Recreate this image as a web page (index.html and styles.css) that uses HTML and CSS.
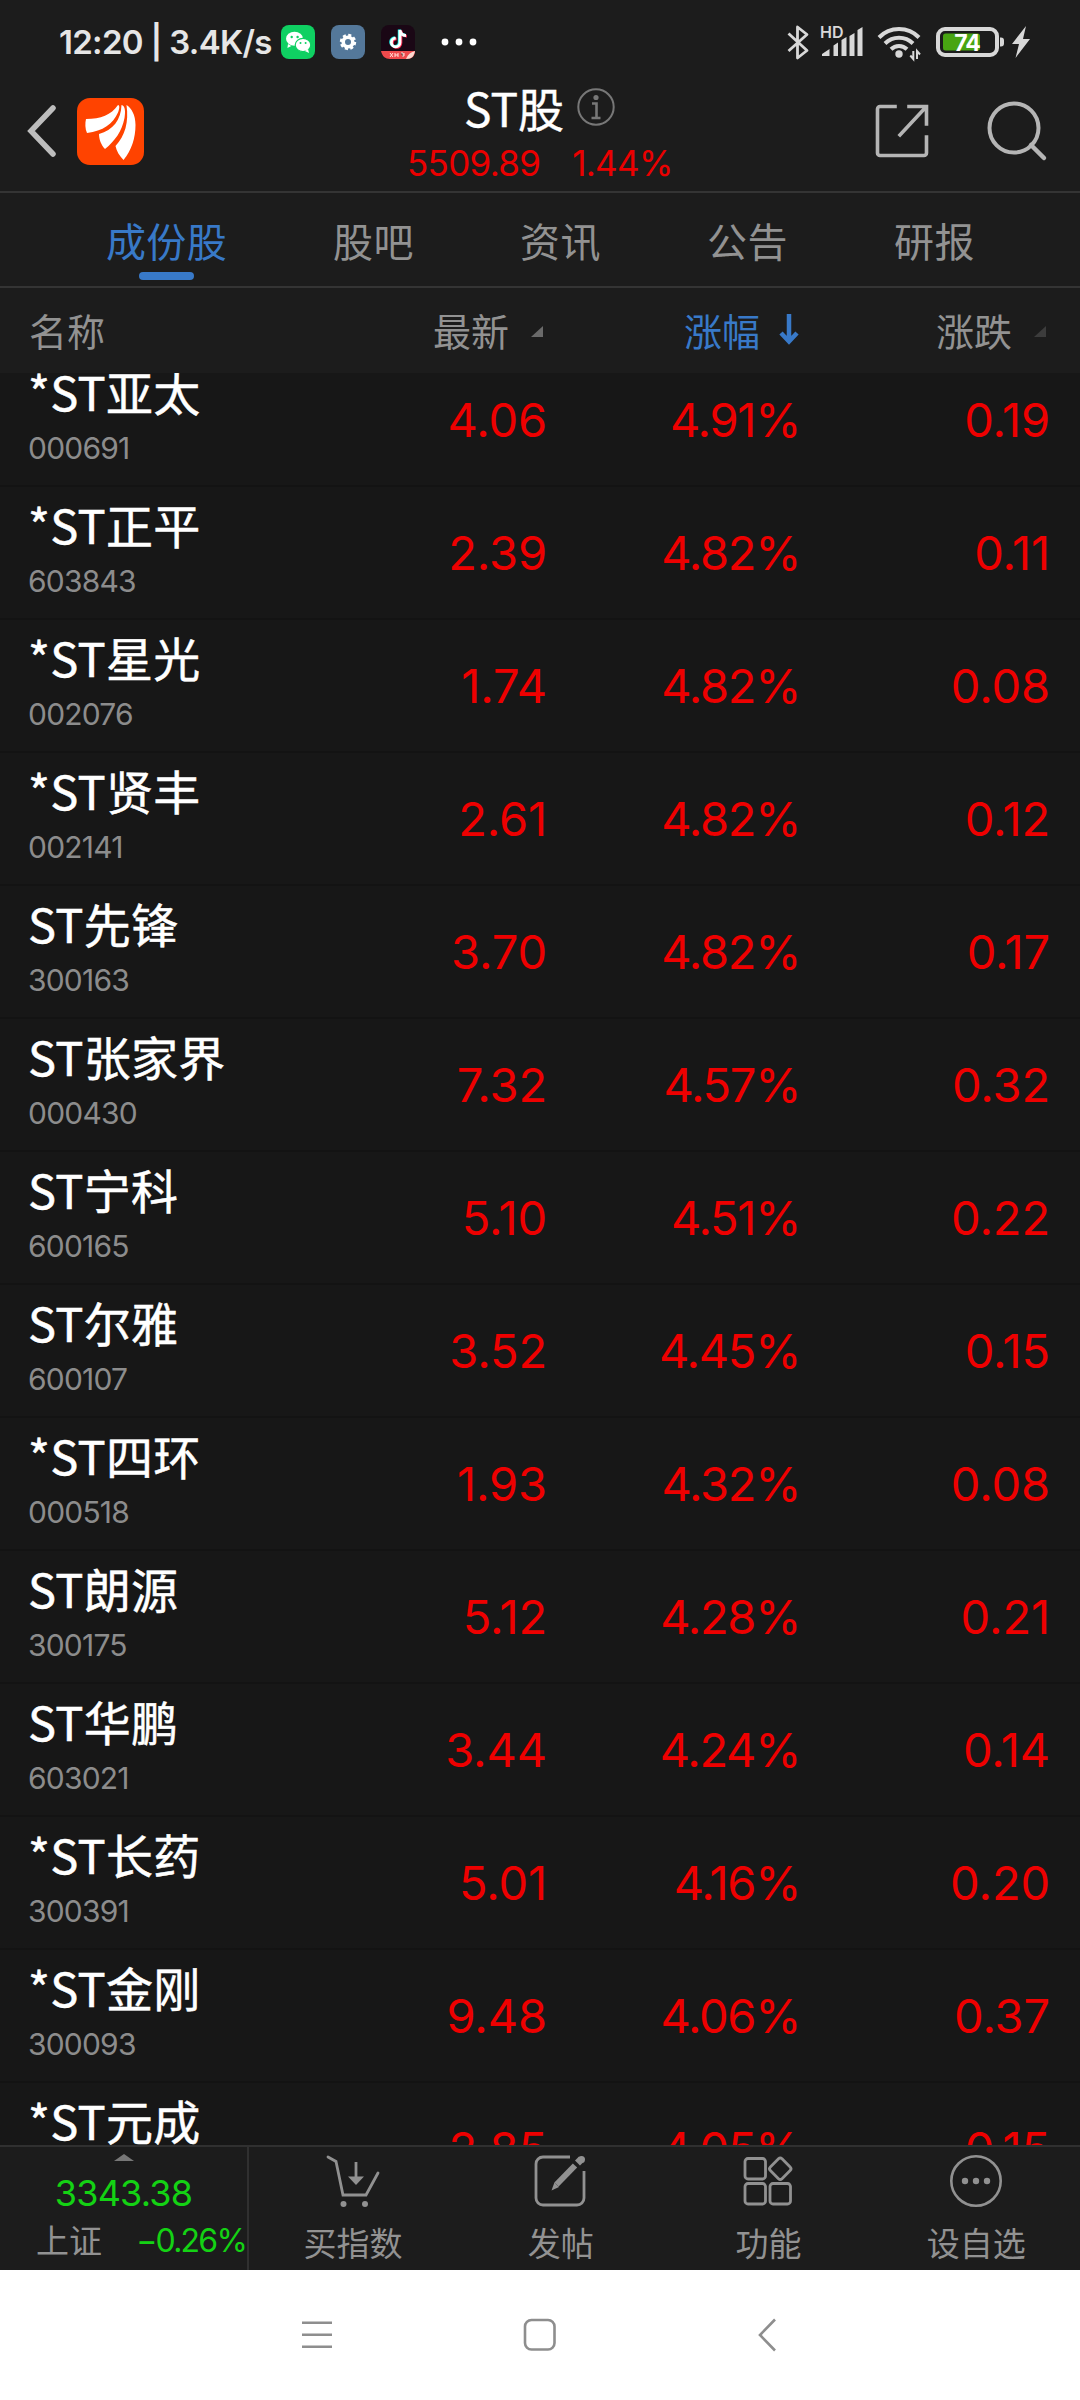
FILE: index.html
```
<!DOCTYPE html>
<html lang="zh-CN">
<head>
<meta charset="utf-8">
<title>ST股</title>
<link rel="stylesheet" href="styles.css">
</head>
<body>
<div class="screen">
<div class="status">
  <span class="status-text">12:20 | 3.4K/s</span>
  <div class="apps">
    <svg class="app-icon" viewBox="0 0 34 34"><rect width="34" height="34" rx="8" fill="#0fd062"/><ellipse cx="13.5" cy="13.800" rx="8.500" ry="7" fill="#fff"/><path d="M7 19l-.6 4 4-2z" fill="#fff"/><ellipse cx="22" cy="20" rx="7.800" ry="6.600" fill="#fff" stroke="#0fd062" stroke-width="1.200"/><path d="M24 26l4 2-1-4z" fill="#fff"/><g fill="#0fd062"><circle cx="10.700" cy="12" r="1.200"/><circle cx="16.600" cy="12" r="1.200"/><circle cx="19.500" cy="18" r="1"/><circle cx="24.600" cy="18" r="1"/></g></svg>
    <svg class="app-icon" viewBox="0 0 34 34"><rect width="34" height="34" rx="8" fill="#54789a"/><circle cx="17" cy="17" r="4.800" fill="none" stroke="#fff" stroke-width="3.600"/><circle cx="17" cy="17" r="7" fill="none" stroke="#fff" stroke-width="2.400" stroke-dasharray="3.100 2.400"/></svg>
    <svg class="app-icon" viewBox="0 0 34 34"><rect width="34" height="34" rx="8" fill="#1a0715"/><g fill="none" stroke-width="2.800"><path d="M19 5v12.500a4.300 4.300 0 1 1-4.300-4.300M19 5c.5 4 3 5.500 6 5.500" stroke="#fe2c55" transform="translate(.9 .6)"/><path d="M19 5v12.500a4.300 4.300 0 1 1-4.300-4.300M19 5c.5 4 3 5.500 6 5.500" stroke="#25f4ee" transform="translate(-.8 -.5)"/><path d="M19 5v12.500a4.300 4.300 0 1 1-4.300-4.300M19 5c.5 4 3 5.500 6 5.500" stroke="#fff"/></g><path d="M0 26h34c0 5-3 8-8 8H9c-5 0-8-3-9-8z" fill="#ee4a4c"/><path d="M25 34c2-4 3-6 9-8-1 5-3 8-9 8z" fill="#fbd9d0"/><path d="M9 28l3 4m0-4l-3 4m5-4v4m0-2h3m0-2v4m3-4h2v4m1-4v3" stroke="#ffe2da" stroke-width="1"/></svg>
  </div>
  <svg class="more-dots" viewBox="0 0 36 8" fill="#fff"><circle cx="4" cy="4" r="3.400"/><circle cx="18" cy="4" r="3.400"/><circle cx="32" cy="4" r="3.400"/></svg>
  <svg class="sys-icons" viewBox="784 24 250 36">
    <path d="M788.500 33.500L807 50.500l-9.500 7.500V27l9.500 7.500L788.500 51" fill="none" stroke="#d8d8d8" stroke-width="2.800" stroke-linejoin="round"/>
    <text class="hd" x="820" y="37.500">HD</text>
    <path fill="#d8d8d8" d="M822 56v-2l7.500-5v7zM833.500 56V45.500l4.500-3V56zM841.500 56V40l5-3v19zM849.500 56V36l5-3v23zM857.500 56V30l5-3v29z"/>
    <g fill="none" stroke="#d8d8d8" stroke-width="4"><path d="M879 37.500a28 28 0 0 1 40 0M885 43.500a20 20 0 0 1 28 0M891 49.300a11.500 11.500 0 0 1 16 0"/></g>
    <circle cx="899" cy="54" r="3.700" fill="#d8d8d8"/>
    <path d="M913.300 51v8l-3-3.500M917 59v-8l3 3.500" fill="none" stroke="#d8d8d8" stroke-width="2"/>
    <rect x="938" y="29" width="59" height="26" rx="7" fill="none" stroke="#d8d8d8" stroke-width="4"/>
    <rect x="943" y="33.500" width="37" height="17" rx="2.500" fill="#48a512"/>
    <path d="M1000 37.500h1a3 3 0 0 1 3 3v3a3 3 0 0 1-3 3h-1z" fill="#d8d8d8"/>
    <text class="battery" x="967" y="50.500">74</text>
    <path d="M1026 26l-14 18h7l-3.500 14L1030 39h-7z" fill="#d8d8d8"/>
  </svg>
</div>

<header class="titlebar">
  <svg class="back" viewBox="0 0 30 54"><path d="M26 4L4 27l22 23" fill="none" stroke="#bdbdbd" stroke-width="5.500" stroke-linecap="round" stroke-linejoin="miter"/></svg>
  <svg class="logo" viewBox="0 0 67 67"><rect width="67" height="67" rx="13" fill="#ff4300"/><g fill="#fff"><path d="M9 21C24 21 34 17 41 7c2 0 1.500 4 0 7.500C36 26 26 33 10 35 8 31 8 25 9 21z"/><path d="M44.500 7c4 1 4 7 3 13C45 33 38 43 28 51c-4-4-6-10-6-15C36 32 44 22 44.500 7z"/><path d="M49.500 7c5 3 9 10 9 20 0 13-4 25-12 35-4-4-7-9-8-14C48 38 52 24 49.500 7z"/></g></svg>
  <div class="heading">
    <h1 class="title">ST股<svg class="info" viewBox="0 0 38 38"><circle cx="19" cy="19" r="17.700" fill="none" stroke="#777" stroke-width="2"/><circle cx="19" cy="9.500" r="2.600" fill="#777"/><path d="M15 15.500h4.500V30M14.500 30h9" fill="none" stroke="#777" stroke-width="2.600"/></svg></h1>
    <div class="quote"><span>5509.89</span><span>1.44%</span></div>
  </div>
  <svg class="share" viewBox="0 0 54 54" fill="none" stroke="#b5b5b5" stroke-width="3.600" stroke-linecap="square"><path d="M20 2.500H5A2.500 2.500 0 0 0 2.500 5v44A2.500 2.500 0 0 0 5 51.500h44a2.500 2.500 0 0 0 2.500-2.500V33M34 2.500h17.500V20M50.500 3.500L25 31"/></svg>
  <svg class="search" viewBox="0 0 60 60" fill="none" stroke="#b5b5b5"><circle cx="27" cy="27" r="24.500" stroke-width="4"/><path d="M44 44l13 13" stroke-width="4.500" stroke-linecap="round"/></svg>
</header>

<nav class="tabs">
  <span class="tab active">成份股</span><span class="tab">股吧</span><span class="tab">资讯</span><span class="tab">公告</span><span class="tab">研报</span>
</nav>

<div class="cols head">
  <span class="col-name">名称</span>
  <span class="col">最新<svg class="tri" viewBox="0 0 12 11"><path d="M12 0v11H0z" fill="#6a6a6a"/></svg></span>
  <span class="col sorted">涨幅<svg class="arrow" viewBox="0 0 20 32"><path d="M10 1v27M2 20l8 8.500 8-8.500" fill="none" stroke="#3879c8" stroke-width="4.500"/></svg></span>
  <span class="col">涨跌<svg class="tri" viewBox="0 0 12 11"><path d="M12 0v11H0z" fill="#3c3c3c"/></svg></span>
</div>

<main class="list">
  <div class="cols row"><div class="stock"><b>*ST亚太</b><i>000691</i></div><span>4.06</span><span class="pct">4.91%</span><span>0.19</span></div>
  <div class="cols row"><div class="stock"><b>*ST正平</b><i>603843</i></div><span>2.39</span><span class="pct">4.82%</span><span>0.11</span></div>
  <div class="cols row"><div class="stock"><b>*ST星光</b><i>002076</i></div><span>1.74</span><span class="pct">4.82%</span><span>0.08</span></div>
  <div class="cols row"><div class="stock"><b>*ST贤丰</b><i>002141</i></div><span>2.61</span><span class="pct">4.82%</span><span>0.12</span></div>
  <div class="cols row"><div class="stock"><b>ST先锋</b><i>300163</i></div><span>3.70</span><span class="pct">4.82%</span><span>0.17</span></div>
  <div class="cols row"><div class="stock"><b>ST张家界</b><i>000430</i></div><span>7.32</span><span class="pct">4.57%</span><span>0.32</span></div>
  <div class="cols row"><div class="stock"><b>ST宁科</b><i>600165</i></div><span>5.10</span><span class="pct">4.51%</span><span>0.22</span></div>
  <div class="cols row"><div class="stock"><b>ST尔雅</b><i>600107</i></div><span>3.52</span><span class="pct">4.45%</span><span>0.15</span></div>
  <div class="cols row"><div class="stock"><b>*ST四环</b><i>000518</i></div><span>1.93</span><span class="pct">4.32%</span><span>0.08</span></div>
  <div class="cols row"><div class="stock"><b>ST朗源</b><i>300175</i></div><span>5.12</span><span class="pct">4.28%</span><span>0.21</span></div>
  <div class="cols row"><div class="stock"><b>ST华鹏</b><i>603021</i></div><span>3.44</span><span class="pct">4.24%</span><span>0.14</span></div>
  <div class="cols row"><div class="stock"><b>*ST长药</b><i>300391</i></div><span>5.01</span><span class="pct">4.16%</span><span>0.20</span></div>
  <div class="cols row"><div class="stock"><b>*ST金刚</b><i>300093</i></div><span>9.48</span><span class="pct">4.06%</span><span>0.37</span></div>
  <div class="cols row"><div class="stock"><b>*ST元成</b></div><span>2.85</span><span class="pct">4.05%</span><span>0.15</span></div>
</main>

<footer class="toolbar">
  <div class="index">
    <svg class="up" viewBox="0 0 40 14"><path d="M20 0l20 14H0z" fill="#777"/></svg>
    <div class="index-value">3343.38</div>
    <div class="index-line"><span>上证</span><span class="fall">−0.26%</span></div>
  </div>
  <div class="tool"><svg viewBox="0 0 54 54" fill="none" stroke="#919191" stroke-width="2.800"><path d="M2 3l8 4.500 7 33.500h23l12-22" stroke-linecap="round"/><path d="M30 8v17"/><path d="M22 22.500h16L30 31z" fill="#919191" stroke="none"/><circle cx="17.500" cy="50" r="3" fill="#919191" stroke="none"/><circle cx="39" cy="50" r="3" fill="#919191" stroke="none"/></svg><span>买指数</span></div>
  <div class="tool"><svg viewBox="0 0 54 54" fill="none" stroke="#919191" stroke-width="2.800"><path d="M36 3H9a7 7 0 0 0-7 7v34a7 7 0 0 0 7 7h34a7 7 0 0 0 7-7V17"/><path d="M41 11.500L22.500 30.500" stroke-width="6"/><path d="M20.400 28.400L17.500 36.500l7.500-3.500z" fill="#919191" stroke="none"/><path d="M43.500 9l4-4" stroke-width="7" /><circle cx="47.500" cy="5.500" r="3.500" fill="#919191" stroke="none"/></svg><span>发帖</span></div>
  <div class="tool"><svg viewBox="0 0 54 54" fill="none" stroke="#919191" stroke-width="2.800"><rect x="4" y="4.500" width="20.500" height="20.500" rx="3"/><rect x="4" y="29.500" width="20.500" height="20.500" rx="3"/><rect x="29" y="29.500" width="20.500" height="20.500" rx="3"/><rect x="31" y="6.500" width="16.500" height="16.500" rx="2.500" transform="rotate(45 39.250 14.750)"/></svg><span>功能</span></div>
  <div class="tool"><svg viewBox="0 0 54 54" fill="none" stroke="#919191" stroke-width="2.600"><circle cx="27" cy="27" r="24.700"/><g fill="#919191" stroke="none"><circle cx="16" cy="27" r="3.200"/><circle cx="27" cy="27" r="3.200"/><circle cx="38" cy="27" r="3.200"/></g></svg><span>设自选</span></div>
</footer>

<div class="sysnav">
  <svg viewBox="0 0 34 34" fill="none" stroke="#8e8e8e" stroke-width="2.600"><path d="M5 4.800h30M5 16.800h30M5 28.800h30"/></svg>
  <svg viewBox="0 0 34 34" fill="none" stroke="#8e8e8e" stroke-width="2.600"><rect x="2" y="2" width="29.500" height="29.500" rx="6.500"/></svg>
  <svg viewBox="0 0 34 34" fill="none" stroke="#8e8e8e" stroke-width="2.600"><path d="M26 1.500L11 17l15 15.500"/></svg>
</div>
</div>
</body>
</html>
```
FILE: styles.css
```
* { box-sizing: border-box; }
body { margin: 0; background: #1c1c1c; font-family: Inter, "Noto Sans CJK SC", sans-serif; }
svg { display: block; flex: none; overflow: visible; }

.screen { display: flex; flex-direction: column; width: 1080px; height: 2400px; overflow: hidden; background: #1c1c1c; }

.status { flex: none; display: flex; align-items: center; height: 84px; padding: 0 46px 0 59px; }
.status-text { width: 222px; font-size: 33px; font-weight: 600; letter-spacing: -0.7px; white-space: nowrap; color: #e6e6e6; }
.apps { display: flex; gap: 16px; }
.app-icon { width: 34px; height: 34px; }
.more-dots { width: 36px; height: 8px; margin-left: 26px; }
.sys-icons { width: 250px; height: 36px; margin-left: auto; }
.hd { font-size: 16px; font-weight: 600; fill: #d8d8d8; }
.battery { font-size: 23px; font-weight: 700; text-anchor: middle; fill: #fff; letter-spacing: -1px; }

.titlebar { flex: none; display: flex; align-items: center; height: 109px; padding: 0 33px 13px 27px; border-bottom: 2px solid #343434; }
.back { width: 30px; height: 54px; }
.logo { width: 67px; height: 67px; margin-left: 20px; }
.heading { flex: 1; display: flex; flex-direction: column; padding-left: 263px; padding-top: 6px; }
.title { display: flex; align-items: center; gap: 13px; margin: 0; padding-left: 57px; font-family: "Noto Sans CJK SC", sans-serif; font-size: 46px; line-height: 54px; font-weight: 400; color: #fff; -webkit-text-stroke: 0.4px #fff; }
.info { width: 38px; height: 38px; }
.quote { display: flex; gap: 32px; margin-top: 4px; font-size: 35px; line-height: 50px; letter-spacing: -0.7px; color: #ea0000; }
.share { width: 54px; height: 54px; }
.search { width: 60px; height: 60px; margin-left: 58px; }

.tabs { flex: none; display: grid; grid-template-columns: 227px repeat(4, 187px); height: 95px; padding-left: 53px; border-bottom: 2px solid #343434; }
.tab { display: flex; flex-direction: column; align-items: center; padding-top: 21px; font-size: 40px; line-height: 58px; letter-spacing: 0.4px; color: #929292; }
.active { color: #3879c8; }
.active::after { content: ""; width: 55px; height: 8px; border-radius: 4px; background: #3879c8; }

.cols { display: grid; grid-template-columns: 297px 250px 252px 251px; padding: 0 30px 0 0; }
.head { flex: none; height: 85px; align-items: center; font-size: 38px; line-height: 56px; padding-top: 2px; color: #929292; }
.col-name { padding-left: 29px; }
.col { display: flex; justify-content: flex-end; align-items: center; }
.sorted { color: #3879c8; }
.tri { width: 12px; height: 11px; margin: 0 4px 0 22px; }
.arrow { width: 20px; height: 32px; margin: 0 0 6px 19px; }

.list { flex: none; height: 1772px; overflow: hidden; background: #171717; }
.row { height: 133px; border-top: 2px solid #131313; font-size: 47px; line-height: 56px; text-align: right; letter-spacing: -0.1px; color: #ee0000; }
.row:first-child { margin-top: -21px; }
.row > span { padding-top: 38px; }
.row > .pct { padding-right: 0; margin-right: -1px; letter-spacing: -1.3px; }
.stock { display: flex; flex-direction: column; padding: 4px 0 0 28px; text-align: left; letter-spacing: 0; white-space: nowrap; }
.stock b { font: 400 47px/66px "Noto Sans CJK SC", sans-serif; letter-spacing: 0.3px; color: #fff; -webkit-text-stroke: 0.5px #fff; }
.stock i { margin-top: 4px; font-style: normal; font-size: 30px; line-height: 40px; letter-spacing: -0.8px; color: #8c8c8c; }

.toolbar { flex: none; display: grid; grid-template-columns: 249px repeat(4, 1fr); height: 125px; border-top: 2px solid #303030; }
.index { display: flex; flex-direction: column; align-items: center; height: 123px; border-right: 2px solid #303030; }
.up { width: 28px; height: 7px; margin-top: 7px; }
.index-value { margin-top: 10px; font-size: 36px; line-height: 44px; letter-spacing: -0.8px; color: #14d214; }
.index-line { display: flex; justify-content: space-between; align-self: stretch; margin-top: 2px; padding: 0 1px 0 36px; font-size: 33px; line-height: 48px; white-space: nowrap; color: #929292; }
.fall { font-size: 32px; letter-spacing: -1.8px; color: #14d214; }
.tool { display: flex; flex-direction: column; align-items: center; padding-top: 7px; font-size: 33px; line-height: 48px; color: #929292; }
.tool svg { width: 54px; height: 54px; }
.tool span { margin-top: 12px; }

.sysnav { flex: none; display: flex; justify-content: center; gap: 192px; height: 130px; padding-top: 48px; background: #fff; }
.sysnav svg { width: 34px; height: 34px; }
```
